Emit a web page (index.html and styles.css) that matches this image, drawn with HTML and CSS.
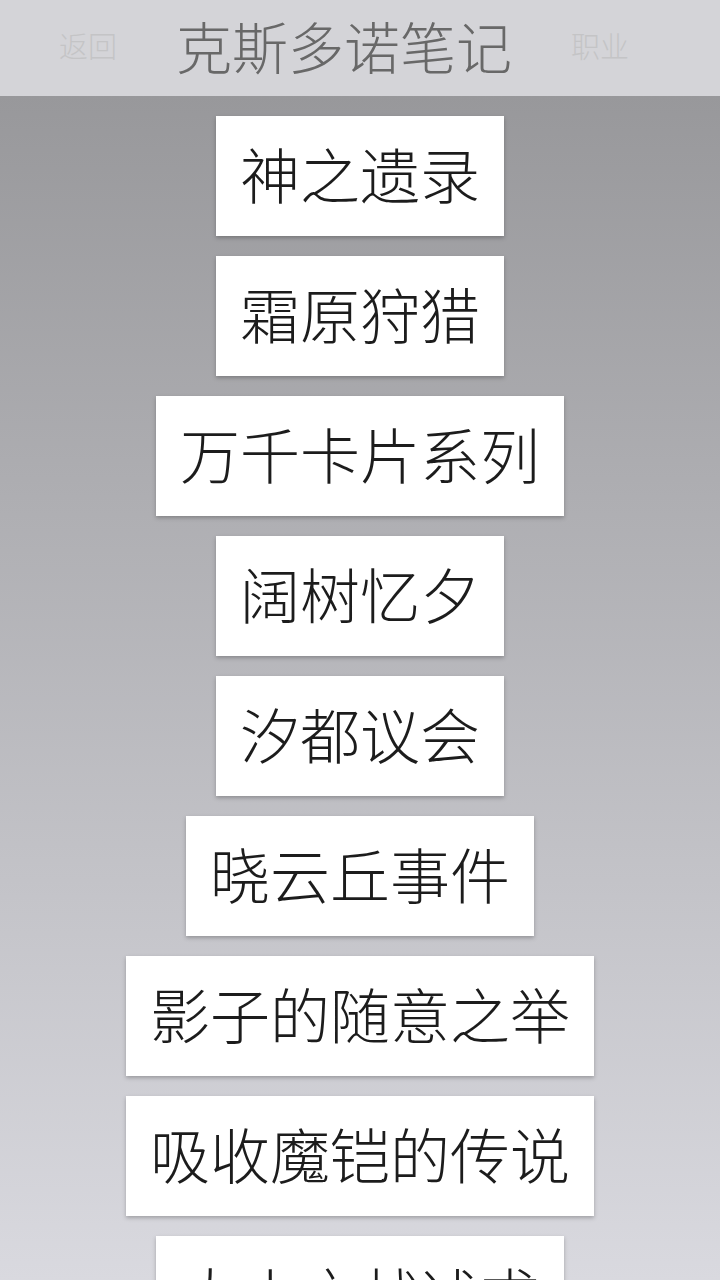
FILE: index.html
```html
<!DOCTYPE html>
<html lang="zh-CN">
<head>
<meta charset="utf-8">
<title>克斯多诺笔记</title>
<link rel="stylesheet" href="styles.css">
</head>
<body>
<header class="topbar">
  <span class="nav-side">返回</span>
  <h1 class="title">克斯多诺笔记</h1>
  <span class="nav-side">职业</span>
</header>
<main class="list">
  <div class="item">神之遗录</div>
  <div class="item">霜原狩猎</div>
  <div class="item">万千卡片系列</div>
  <div class="item">阔树忆夕</div>
  <div class="item">汐都议会</div>
  <div class="item">晓云丘事件</div>
  <div class="item">影子的随意之举</div>
  <div class="item">吸收魔铠的传说</div>
  <div class="item">大小之战述求</div>
</main>
</body>
</html>
```
FILE: styles.css
```css
html, body {
  margin: 0;
  padding: 0;
}
body {
  width: 720px;
  height: 1280px;
  overflow: hidden;
  font-family: "Noto Sans CJK SC", "Noto Sans", sans-serif;
  font-weight: 300;
  background: linear-gradient(to bottom, #98989b 96px, #d9d9df 1280px);
}
.topbar {
  height: 96px;
  box-sizing: border-box;
  padding-bottom: 6px;
  background: #d4d4d8;
  display: flex;
  align-items: center;
}
.nav-side {
  width: 176px;
  text-align: center;
  font-size: 29px;
  color: #c4c4c6;
  line-height: 1;
}
.title {
  margin: 0;
  width: 336px;
  text-align: center;
  font-size: 56px;
  font-weight: 300;
  color: #686868;
  line-height: 1;
}
.list {
  display: flex;
  flex-direction: column;
  align-items: center;
  gap: 20px;
  padding-top: 20px;
}
.item {
  height: 120px;
  box-sizing: border-box;
  padding: 0 24px 6px;
  background: #ffffff;
  display: flex;
  align-items: center;
  font-size: 60px;
  line-height: 1;
  color: #1c1c1c;
  box-shadow: 0 2px 4px rgba(0, 0, 0, 0.25);
  white-space: nowrap;
}
```
